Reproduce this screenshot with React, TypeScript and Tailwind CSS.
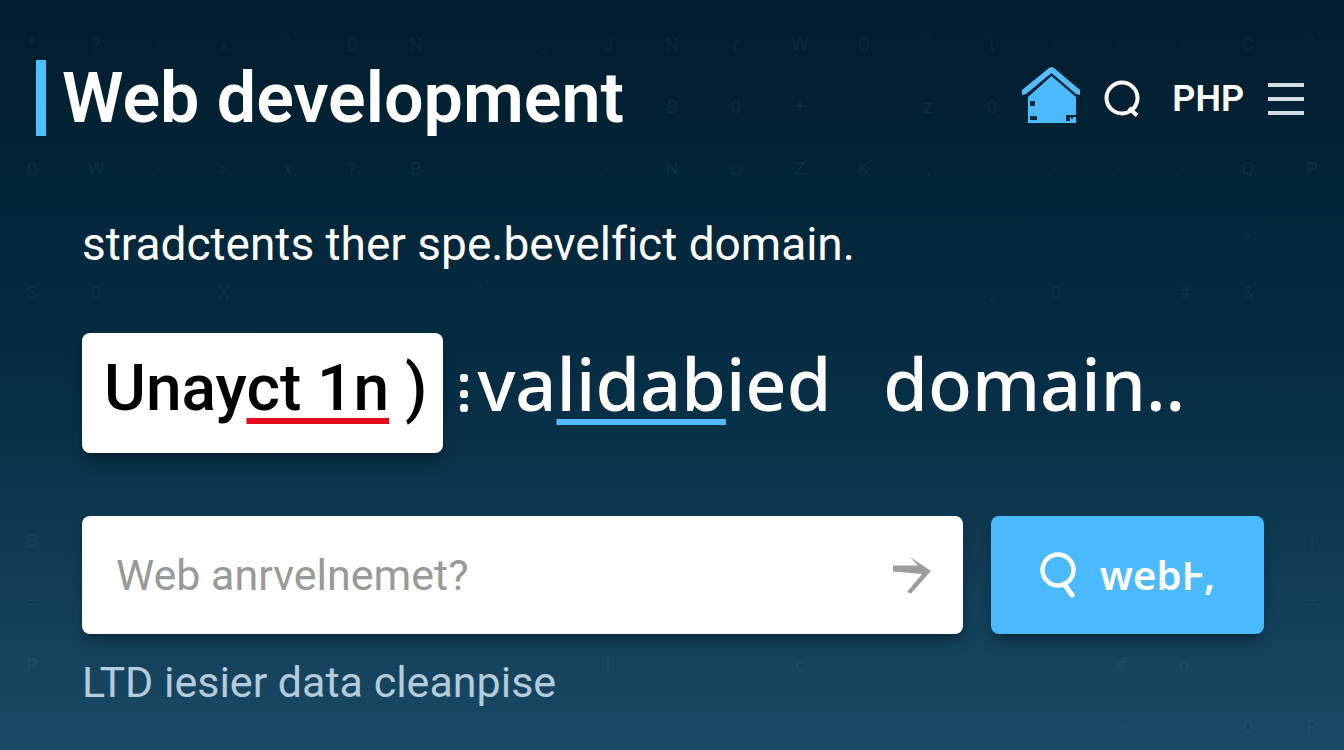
import { useState } from 'react';

const PATTERN_ROWS = [
  "^?-x'BN-,JNrWQ't---C'",
  "          B0+'z0    '",
  "0W->x?B-'-NoZK,'---QP",
  "                   , ",
  "S0-X  -'       ,0-#&",
  "                     ",
  "                     ",
  "                     ",
  "B                   |",
  "=                   =",
  "P        l  c   -#o- ",
  "                 - 0P",
];

const HomeIcon = () => (
  <svg width="58" height="56" viewBox="0 0 58 56" aria-hidden="true">
    <path d="M0 23 L27 1 Q29.500 -0.500 32 1 L58 23 V28 L54 27 L29.500 6 L4 27 L0 28 Z" fill="#55bdfb" />
    <path d="M6 30 L29.500 9 L54 30 V56 H6 Z" fill="#4bbaff" />
    <path d="M8 34 h5 v5 h-5 z M8 49 h7 v4 h-7 z M44 48 h10 v2 h-3 v2 h-2 v-2 h-1 v4 h-4 z" fill="#05263c" />
  </svg>
);

const HeaderSearchIcon = () => (
  <svg width="36" height="38" viewBox="0 0 36 38" fill="none" stroke="white" aria-hidden="true">
    <circle cx="18" cy="18" r="15.500" strokeWidth="4" />
    <path d="M25 28 L33 35.500" strokeWidth="4" />
  </svg>
);

const ButtonSearchIcon = () => (
  <svg width="36" height="46" viewBox="0 0 36 46" fill="none" stroke="white" aria-hidden="true">
    <circle cx="18" cy="18" r="15.500" strokeWidth="4.500" />
    <path d="M24 32 L32 43" strokeWidth="5" strokeLinecap="round" />
  </svg>
);

const MenuIcon = () => (
  <svg width="36" height="32" viewBox="0 0 36 32" fill="#d3dbe4" aria-hidden="true">
    <path d="M0 0h36v4H0zM0 14h36v4H0zM0 28h36v4H0z" />
  </svg>
);

const ArrowIcon = () => (
  <svg width="38" height="37" viewBox="0 0 38 37" fill="#9c9c9c" aria-hidden="true">
    <path d="M0 8.500 H25 L17 0 L38 14 L18 36.500 L14 35 L29 17 L0 14.500 Z" />
  </svg>
);

const DotsIcon = () => (
  <svg width="10" height="40" viewBox="0 0 10 40" fill="white" aria-hidden="true">
    <rect x="1" y="1" width="8" height="8" rx="3" />
    <rect x="1" y="17" width="8" height="8" rx="3" />
    <rect x="1" y="31" width="8" height="8" rx="3" />
  </svg>
);

const BackgroundPattern = () => (
  <div
    aria-hidden="true"
    className="pointer-events-none absolute inset-0 grid auto-rows-[62px] content-start pt-[14px] text-lg leading-none text-[#8fc6e0]/8 select-none"
  >
    {PATTERN_ROWS.map((row, r) => (
      <div key={r} className="grid grid-cols-21 items-center text-center">
        {row.split('').map((char, c) => (
          <span key={c}>{char}</span>
        ))}
      </div>
    ))}
  </div>
);

export default function App() {
  const [query, setQuery] = useState('');

  return (
    <div className="relative min-h-screen overflow-hidden bg-linear-to-b from-[#011d2e] via-[#062d43] to-[#1a4a66] font-[Roboto,sans-serif] text-white [font-variant-ligatures:none]">
      <BackgroundPattern />

      <header className="relative flex items-center justify-between pt-15 pr-10 pl-9">
        <div className="flex items-center gap-4">
          <span className="h-19 w-[10px] bg-[#4bc1ff]" />
          <h1 className="text-[70px] leading-19 font-semibold">Web development</h1>
        </div>
        <nav className="flex items-center gap-6 pt-0.5">
          <a href="#home" aria-label="Home" className="-mt-2">
            <HomeIcon />
          </a>
          <button type="button" aria-label="Search">
            <HeaderSearchIcon />
          </button>
          <a href="#php" className="ml-2 text-4xl font-semibold">PHP</a>
          <button type="button" aria-label="Menu">
            <MenuIcon />
          </button>
        </nav>
      </header>

      <main className="relative pt-20 pr-20 pl-[82px]">
        <p className="text-[46px] leading-14">stradctents ther spe.bevelfict domain.</p>

        <div className="mt-[61px] flex items-center gap-4">
          <div className="rounded-lg bg-white pr-4 pb-2 pl-[22px] text-[64px] leading-[112px] font-medium whitespace-nowrap text-black shadow-lg shadow-black/30">
            Unay
            <span className="underline decoration-[#e60a1e] decoration-[6px] underline-offset-8 [text-decoration-skip-ink:none]">
              ct 1n
            </span>{' '}
            )
          </div>
          <div className="flex items-center gap-2 font-['Noto_Sans',sans-serif] text-7xl font-medium whitespace-nowrap">
            <DotsIcon />
            <span className="pb-5 leading-[100px]">
              va
              <span className="underline decoration-[#55b9f5] decoration-[6px] underline-offset-8 [text-decoration-skip-ink:none]">
                lidab
              </span>
              ied
            </span>
            <span className="ml-11 pb-5 leading-[100px]">domain..</span>
          </div>
        </div>

        <form className="mt-[63px] flex gap-7" onSubmit={(e) => e.preventDefault()}>
          <div className="flex h-[118px] flex-1 items-center rounded-lg bg-white pr-8 pl-[34px] shadow-lg shadow-black/30">
            <input
              type="text"
              aria-label="Web search"
              value={query}
              onChange={(e) => setQuery(e.target.value)}
              placeholder="Web anrvelnemet?"
              className="min-w-0 flex-1 text-[43px] text-black outline-none placeholder:text-[#999999]"
            />
            <button type="submit" aria-label="Go">
              <ArrowIcon />
            </button>
          </div>
          <button
            type="submit"
            className="flex h-[118px] w-[273px] items-center justify-center gap-6 rounded-lg bg-[#4bbafd] font-['Noto_Sans',sans-serif] text-[40px] font-semibold shadow-lg shadow-black/30"
          >
            <ButtonSearchIcon />
            <span>webⱵ,</span>
          </button>
        </form>

        <p className="mt-5 text-[43px] leading-14 text-[#b4cbdc]">LTD iesier data cleanpise</p>
      </main>
    </div>
  );
}
